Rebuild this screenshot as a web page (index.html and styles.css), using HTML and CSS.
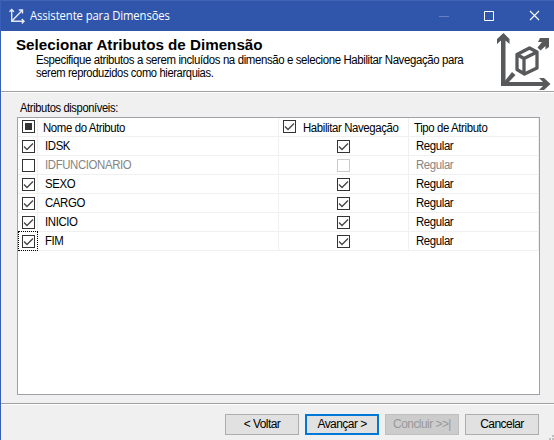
FILE: index.html
```html
<!DOCTYPE html>
<html lang="pt-BR">
<head>
<meta charset="utf-8">
<title>Assistente para Dimensões</title>
<link rel="stylesheet" href="styles.css">
</head>
<body>
<svg width="0" height="0" class="defs"><symbol id="tick" viewBox="0 0 13 13"><path d="M2 6.5 5 9.5 11 3.5" fill="none" stroke="#444" stroke-width="1.3"/></symbol></svg>
<div class="window">
  <header class="titlebar">
    <svg class="app-icon" width="16" height="16" viewBox="0 0 16 16" fill="none" stroke="#e4e8f0" stroke-width="1.4"><path d="M2.700 1.500V13.300H15M2.700 13.300 13 2.500M.5 3.700 2.700 1.500 4.900 3.700M9.800 2H13.500V5.500M12.800 11.100 15 13.300 12.800 15.500"/></svg>
    <span class="caption">Assistente para Dimensões</span>
    <svg class="controls" width="116" height="12" viewBox="0 0 116 12" fill="none"><path d="M0 6.500H10" stroke="#6680c3"/><path d="M45.500 1.500H54.500V10.500H45.500Z" stroke="#fff"/><path d="M91 1 100 10M100 1 91 10" stroke="#fff" stroke-width="1.1"/></svg>
  </header>
  <section class="banner">
    <div class="intro">
      <h1>Selecionar Atributos de Dimensão</h1>
      <p><span class="line-one">Especifique atributos a serem incluídos na dimensão e selecione Habilitar Navegação para</span><br><span class="line-two">serem reproduzidos como hierarquias.</span></p>
    </div>
    <svg class="cube" width="58" height="58" viewBox="0 0 58 58"><g fill="#58595b"><path d="M6.500 2 12.500 8V13L8.500 9.500V51H46L42 47H47L53.500 53 47 59H42L46 55H4V9.500L0 13V8Z"/><path d="M7 51 15 41 18.500 44 10 53Z"/><path d="M43 7H52V16L48.500 18.500V15L43.500 19.500 40.500 16.500 45 11H41Z"/></g><path d="M20 23.500 32.500 17 40 21V37L27.500 43 20 38.500ZM20 23.500 27 27.500 40 21M27 27.500V43" fill="none" stroke="#58595b" stroke-width="3.300" stroke-linejoin="round"/></svg>
  </section>
  <main>
    <div class="label"><span>Atributos disponíveis:</span></div>
    <div class="grid">
      <div class="row head"><div class="c1"><i class="box mixed"></i></div><div class="c2"><span>Nome do Atributo</span></div><div class="c3"><i class="box"><svg><use href="#tick"/></svg></i><span>Habilitar Navegação</span></div><div class="c4"><span>Tipo de Atributo</span></div></div>
      <div class="row"><div class="c1"><i class="box"><svg><use href="#tick"/></svg></i></div><div class="c2"><span>IDSK</span></div><div class="c3"><i class="box"><svg><use href="#tick"/></svg></i></div><div class="c4"><span>Regular</span></div></div>
      <div class="row off"><div class="c1"><i class="box"></i></div><div class="c2"><span>IDFUNCIONARIO</span></div><div class="c3"><i class="box dim"></i></div><div class="c4"><span>Regular</span></div></div>
      <div class="row"><div class="c1"><i class="box"><svg><use href="#tick"/></svg></i></div><div class="c2"><span>SEXO</span></div><div class="c3"><i class="box"><svg><use href="#tick"/></svg></i></div><div class="c4"><span>Regular</span></div></div>
      <div class="row"><div class="c1"><i class="box"><svg><use href="#tick"/></svg></i></div><div class="c2"><span>CARGO</span></div><div class="c3"><i class="box"><svg><use href="#tick"/></svg></i></div><div class="c4"><span>Regular</span></div></div>
      <div class="row"><div class="c1"><i class="box"><svg><use href="#tick"/></svg></i></div><div class="c2"><span>INICIO</span></div><div class="c3"><i class="box"><svg><use href="#tick"/></svg></i></div><div class="c4"><span>Regular</span></div></div>
      <div class="row"><div class="c1 focus"><i class="box"><svg><use href="#tick"/></svg></i></div><div class="c2"><span>FIM</span></div><div class="c3"><i class="box"><svg><use href="#tick"/></svg></i></div><div class="c4"><span>Regular</span></div></div>
    </div>
  </main>
  <footer>
    <button>&lt; Voltar</button><button class="primary">Avançar &gt;</button><button disabled>Concluir &gt;&gt;|</button><button>Cancelar</button>
    <svg class="grip" width="5" height="5"><path d="M3 0h2v2h-2zM0 3h2v2h-2zM3 3h2v2h-2z" fill="#bfbfbf"/></svg>
  </footer>
</div>
</body>
</html>
```
FILE: styles.css
```css
* { box-sizing: border-box; }
body { margin: 0; font: 12px/13px "Liberation Sans", sans-serif; letter-spacing: -0.4px; color: #000; }
.defs { position: absolute; }
span { white-space: nowrap; display: inline-block; transform-origin: 0 50%; }
.window { width: 554px; height: 440px; display: flex; flex-direction: column; background: #f0f0f0; border-left: 1px solid #3a5fb8; overflow: hidden; }
.titlebar { height: 31px; flex: none; display: flex; align-items: center; background: #3056ac; border-top: 1px solid #4265b5; padding-left: 8px; color: #fff; }
.caption { margin-left: 5px; font: 12px/16px "Open Sans", sans-serif; letter-spacing: -0.1px; transform: scaleX(0.94); }
.controls { margin-left: auto; margin-right: -1px; }
.banner { height: 62px; flex: none; display: flex; justify-content: space-between; background: #fff; border-bottom: 1px solid #fff; box-shadow: inset 0 -1px #a0a0a0; }
.intro { padding: 7px 0 0 15px; }
h1 { margin: 0; width: max-content; font-size: 14px; line-height: 15px; letter-spacing: 0; transform: scaleX(1.084); transform-origin: 0 50%; }
p { margin: 1px 0 0 20px; }
.line-one { transform: scaleX(0.953); }
.line-two { transform: scaleX(0.932); }
.cube { margin-right: -1px; overflow: visible; }
main { flex: 1; padding: 9px 14px 8px 16px; display: flex; flex-direction: column; }
.label { height: 15px; padding-left: 3px; }
.label span { transform: scaleX(0.93); }
.grid { flex: 1; background: #fff; border: 1px solid #a0a0a8; }
.row { display: grid; grid-template-columns: 20px 241px 130px 130px; height: 19px; }
.row > div { border-right: 1px solid #f0f0f0; border-bottom: 1px solid #f0f0f0; display: flex; align-items: center; }
.row.head > div { align-items: flex-start; padding-top: 2px; }
.row .c1 { padding-left: 4px; }
.row .c2 { padding-left: 7px; }
.row .c3 { justify-content: center; }
.row .c4 { padding-left: 7px; }
.row span { transform: scaleX(0.95); }
.row.head .c2 { padding-left: 5px; }
.row.head .c4 { padding-left: 5px; }
.row.head .c3 { justify-content: flex-start; padding-left: 4px; gap: 7px; }
.row.head span { margin-top: 2px; }
.row.off { color: #858585; }
.box { width: 13px; height: 13px; border: 1px solid #333; background: #fff; display: block; flex: none; }
.box svg { display: block; width: 13px; height: 13px; margin: -1px; }
.mixed { background: #333; box-shadow: inset 0 0 0 2px #fff; }
.dim { border-color: #ccc; }
.row .c1.focus { position: relative; }
.focus::after { content: ""; position: absolute; inset: -1px -1px -1px 0; border: 1px dotted #000; }
footer { height: 37px; flex: none; border-top: 1px solid #a0a0a0; box-shadow: inset 0 1px #fff; padding: 10px 15px 0; display: flex; gap: 6px; justify-content: flex-end; position: relative; }
button { width: 74px; height: 21px; padding: 0; border: 1px solid #adadad; background: #e1e1e1; font: inherit; letter-spacing: -0.55px; color: #000; }
.primary { border: 2px solid #0078d7; }
button:disabled { background: #ccc; border-color: #bfbfbf; color: #999; }
.grip { position: absolute; right: 0; bottom: 0; }
```
